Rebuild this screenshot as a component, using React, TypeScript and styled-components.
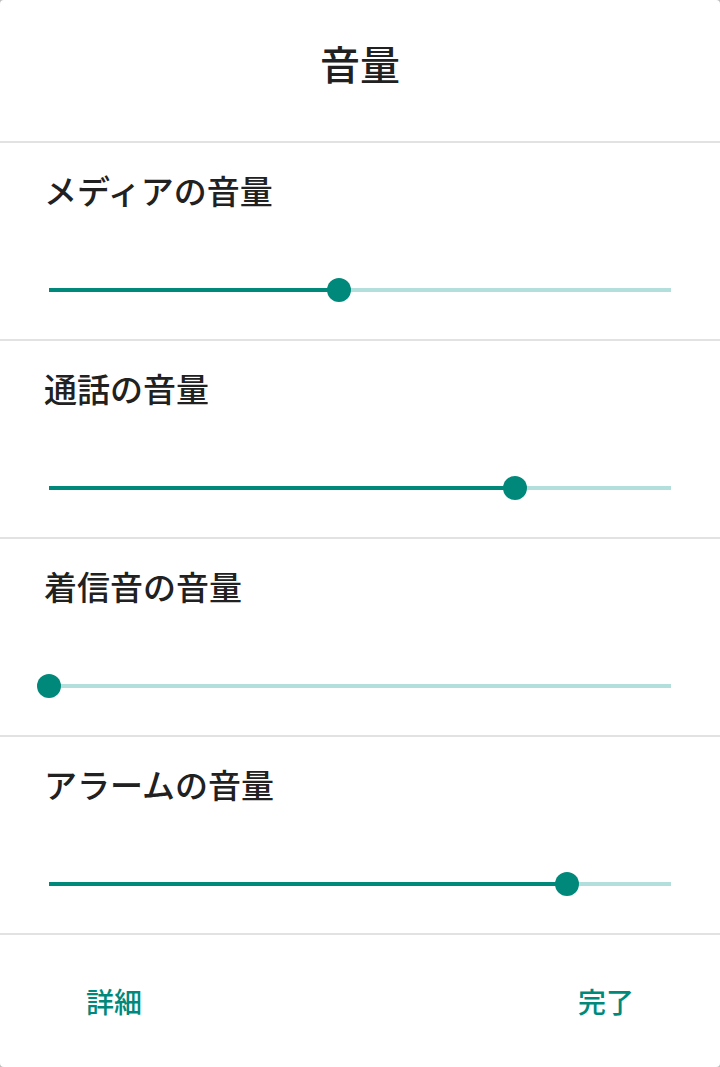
import { createGlobalStyle, styled } from 'styled-components';

const GlobalStyle = createGlobalStyle`
  html, body {
    margin: 0;
    padding: 0;
    background: #bdbdbd;
  }
  body {
    font-family: 'Noto Sans CJK JP', 'Noto Sans', sans-serif;
  }
`;

type Volume = {
  label: string;
  value: number;
};

const volumes: Volume[] = [
  { label: 'メディアの音量', value: 0.466 },
  { label: '通話の音量', value: 0.749 },
  { label: '着信音の音量', value: 0 },
  { label: 'アラームの音量', value: 0.833 },
];

const VolumeSlider = ({ value }: { value: number }) => {
  const pct = `${value * 100}%`;
  return (
    <SliderBox>
      <Track>
        <Fill style={{ width: pct }} />
        <Thumb style={{ left: pct }} />
      </Track>
    </SliderBox>
  );
};

export default function App() {
  return (
    <>
      <GlobalStyle />
      <Dialog>
        <Header>
          <Title>音量</Title>
        </Header>
        {volumes.map((v) => (
          <Section key={v.label}>
            <Label>{v.label}</Label>
            <VolumeSlider value={v.value} />
          </Section>
        ))}
        <Footer>
          <TextButton>詳細</TextButton>
          <TextButton>完了</TextButton>
        </Footer>
      </Dialog>
    </>
  );
}

const Dialog = styled.div`
  width: 720px;
  height: 1067px;
  background: #ffffff;
  border-radius: 4px;
  display: flex;
  flex-direction: column;
  overflow: hidden;
`;

const Header = styled.div`
  box-sizing: border-box;
  height: 143px;
  display: flex;
  align-items: center;
  justify-content: center;
  padding-bottom: 16px;
  border-bottom: 2px solid #e2e2e2;
  flex-shrink: 0;
`;

const Title = styled.h1`
  margin: 0;
  font-size: 40px;
  line-height: 48px;
  font-weight: 500;
  color: #212121;
`;

const Section = styled.div`
  box-sizing: border-box;
  height: 198px;
  padding-top: 27px;
  border-bottom: 2px solid #e2e2e2;
  display: flex;
  flex-direction: column;
  flex-shrink: 0;
`;

const Label = styled.div`
  padding: 0 44px;
  font-size: 33px;
  line-height: 40px;
  font-weight: 500;
  color: #212121;
`;

const SliderBox = styled.div`
  margin: 56px 49px 0;
  height: 48px;
  display: flex;
  align-items: center;
`;

const Track = styled.div`
  position: relative;
  flex: 1;
  height: 4px;
  background: #b2dfdb;
`;

const Fill = styled.div`
  height: 100%;
  background: #00897b;
`;

const Thumb = styled.div`
  position: absolute;
  top: 50%;
  width: 24px;
  height: 24px;
  border-radius: 50%;
  background: #00897b;
  transform: translate(-50%, -50%);
`;

const Footer = styled.div`
  flex: 1;
  display: flex;
  align-items: center;
  justify-content: space-between;
  padding: 0 70px;
`;

const TextButton = styled.button`
  border: none;
  background: none;
  padding: 8px 16px;
  font-family: inherit;
  font-size: 28px;
  line-height: 36px;
  font-weight: 500;
  color: #00897b;
  cursor: pointer;
`;
